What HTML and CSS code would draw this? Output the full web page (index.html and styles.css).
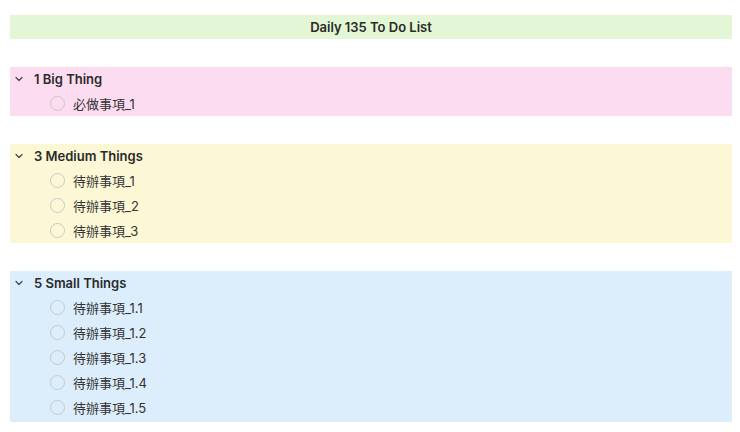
FILE: index.html
```html
<!DOCTYPE html>
<html>
<head>
<meta charset="utf-8">
<link rel="stylesheet" href="styles.css">
</head>
<body>
<div class="page">
  <div class="title">Daily 135 To Do List</div>

  <section class="group pink">
    <div class="head"><svg class="chev" viewBox="0 0 8 6" width="8" height="6"><path d="M1 1.5 L4 4.5 L7 1.5" /></svg><span>1 Big Thing</span></div>
    <div class="item"><span class="circle"></span><span class="txt">必做事項_1</span></div>
  </section>

  <section class="group yellow">
    <div class="head"><svg class="chev" viewBox="0 0 8 6" width="8" height="6"><path d="M1 1.5 L4 4.5 L7 1.5" /></svg><span>3 Medium Things</span></div>
    <div class="item"><span class="circle"></span><span class="txt">待辦事項_1</span></div>
    <div class="item"><span class="circle"></span><span class="txt">待辦事項_2</span></div>
    <div class="item"><span class="circle"></span><span class="txt">待辦事項_3</span></div>
  </section>

  <section class="group blue">
    <div class="head"><svg class="chev" viewBox="0 0 8 6" width="8" height="6"><path d="M1 1.5 L4 4.5 L7 1.5" /></svg><span>5 Small Things</span></div>
    <div class="item"><span class="circle"></span><span class="txt">待辦事項_1.1</span></div>
    <div class="item"><span class="circle"></span><span class="txt">待辦事項_1.2</span></div>
    <div class="item"><span class="circle"></span><span class="txt">待辦事項_1.3</span></div>
    <div class="item"><span class="circle"></span><span class="txt">待辦事項_1.4</span></div>
    <div class="item"><span class="circle"></span><span class="txt">待辦事項_1.5</span></div>
  </section>
</div>
</body>
</html>
```

FILE: styles.css
```css
html, body {
  margin: 0;
  padding: 0;
  background: #ffffff;
}
body {
  font-family: Inter, "Noto Sans CJK TC", sans-serif;
  color: #2b2b2b;
}
.page {
  display: flex;
  flex-direction: column;
  gap: 28px;
  padding: 15px 8px 0 10px;
}
.title {
  height: 24px;
  line-height: 25px;
  background: #e3f6d5;
  text-align: center;
  font-size: 13px;
  font-weight: 600;
  color: #2a2a2a;
}
.group {
  display: flex;
  flex-direction: column;
}
.pink { background: #fcdcf0; }
.yellow { background: #fcf8d6; }
.blue { background: #dcedfb; padding-bottom: 2px; }
.head {
  height: 24px;
  display: flex;
  align-items: center;
  font-size: 13px;
  font-weight: 600;
  color: #2a2a2a;
}
.chev {
  margin-left: 5px;
  margin-right: 11px;
  fill: none;
  stroke: #444;
  stroke-width: 1.2;
  stroke-linecap: round;
  stroke-linejoin: round;
}
.item {
  height: 25px;
  display: flex;
  align-items: center;
  font-size: 13px;
  color: #333;
}
.circle {
  width: 13px;
  height: 13px;
  border: 1px solid #c9c9c9;
  border-radius: 50%;
  margin-left: 40px;
  margin-right: 8px;
  box-sizing: content-box;
}
.txt {
  font-family: Inter, "Noto Sans CJK TC", sans-serif;
}
```
